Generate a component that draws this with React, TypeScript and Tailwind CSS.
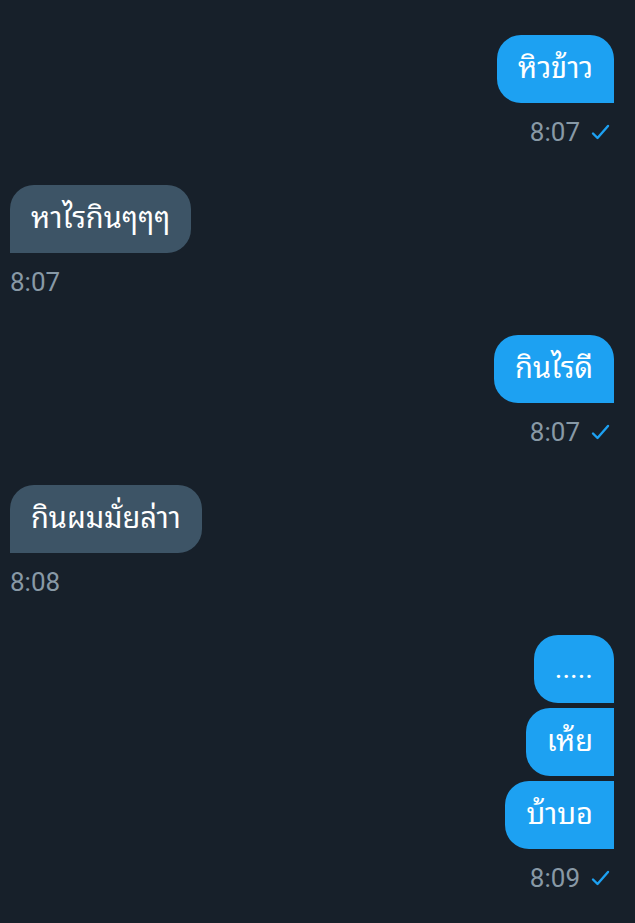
import React from "react";

const font = {
  fontFamily:
    'Roboto, "Noto Sans Thai Looped", "Noto Sans Thai", Loma, Garuda, Waree, "Noto Sans", sans-serif',
};

function Check() {
  return (
    <svg width="19" height="16" viewBox="0 0 19 16" className="ml-[11px]">
      <path d="M2 9.5 L6.5 14 L17 2" fill="none" stroke="#1da1f2" strokeWidth="2.4" strokeLinecap="round" strokeLinejoin="round" />
    </svg>
  );
}

function Sent({ texts, time }: { texts: string[]; time: string }) {
  return (
    <div className="flex flex-col items-end">
      <div className="flex flex-col items-end gap-[5px]">
        {texts.map((t, i) => {
          const first = i === 0;
          const cls = first
            ? "rounded-tl-[24px] rounded-tr-[24px] rounded-bl-[24px] rounded-br-none"
            : "rounded-tl-[24px] rounded-bl-[24px] rounded-tr-none rounded-br-none";
          return (
            <div key={i} className={`h-[68px] flex items-center px-[21px] bg-[#1da1f2] text-white text-[29px] ${cls}`}>
              {t}
            </div>
          );
        })}
      </div>
      <div className="mt-[15px] h-[28px] flex items-center pr-[4px] text-[26px] text-[#8899a6]">
        <span>{time}</span>
        <Check />
      </div>
    </div>
  );
}

function Received({ text, time }: { text: string; time: string }) {
  return (
    <div className="flex flex-col items-start">
      <div className="h-[68px] flex items-center px-[21px] bg-[#3d5466] text-white text-[29px] rounded-tl-[24px] rounded-tr-[24px] rounded-br-[24px] rounded-bl-none">
        {text}
      </div>
      <div className="mt-[15px] h-[28px] flex items-center text-[26px] text-[#8899a6]">{time}</div>
    </div>
  );
}

export default function App() {
  return (
    <div className="w-[635px] h-[923px] bg-[#17202a] overflow-hidden" style={font}>
      <div className="flex flex-col gap-[39px] pt-[35px] pl-[10px] pr-[21px]">
        <Sent texts={["หิวข้าว"]} time="8:07" />
        <Received text="หาไรกินๆๆๆ" time="8:07" />
        <Sent texts={["กินไรดี"]} time="8:07" />
        <Received text="กินผมมั่ยล่าา" time="8:08" />
        <Sent texts={[".....", "เห้ย", "บ้าบอ"]} time="8:09" />
      </div>
    </div>
  );
}
